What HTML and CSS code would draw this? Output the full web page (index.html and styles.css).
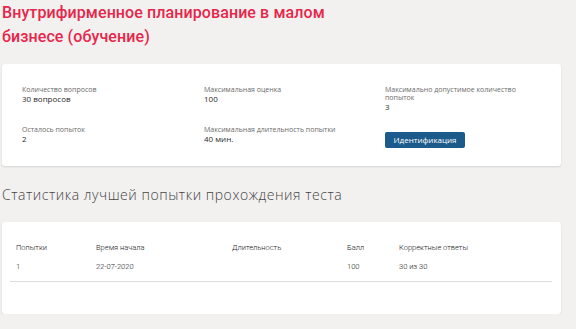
FILE: index.html
```html
<!DOCTYPE html>
<html lang="ru">
<head>
<meta charset="utf-8">
<link rel="stylesheet" href="styles.css">
</head>
<body>
<div class="page">
  <h1 class="title">Внутрифирменное планирование в малом бизнесе (обучение)</h1>
  <div class="card info">
    <div class="info-grid">
      <div class="item"><div class="label">Количество вопросов</div><div class="value">30 вопросов</div></div>
      <div class="item"><div class="label">Максимальная оценка</div><div class="value">100</div></div>
      <div class="item"><div class="label">Максимально допустимое количество попыток</div><div class="value">3</div></div>
      <div class="item"><div class="label">Осталось попыток</div><div class="value">2</div></div>
      <div class="item"><div class="label">Максимальная длительность попытки</div><div class="value">40 мин.</div></div>
      <div class="item"><button class="btn">Идентификация</button></div>
    </div>
  </div>
  <h2 class="subtitle">Статистика лучшей попытки прохождения теста</h2>
  <div class="card stats">
    <table class="tbl">
      <thead>
        <tr><th class="c1">Попытки</th><th class="c2">Время начала</th><th class="c3">Длительность</th><th class="c4">Балл</th><th class="c5">Корректные ответы</th></tr>
      </thead>
      <tbody>
        <tr><td>1</td><td>22-07-2020</td><td></td><td>100</td><td>30 из 30</td></tr>
      </tbody>
    </table>
  </div>
</div>
</body>
</html>
```
FILE: styles.css
```css
html, body {
  margin: 0;
  padding: 0;
  background: #f2f1f0;
}
body {
  font-family: "Open Sans", "Noto Sans", sans-serif;
  color: #333;
}
.page {
  width: 559px;
  padding: 0 0 0 2px;
}
.title {
  margin: 0;
  padding-top: 1px;
  font-family: Roboto, "Noto Sans", sans-serif;
  font-size: 16px;
  line-height: 24px;
  font-weight: 500;
  color: #e6264b;
  width: 345px;
  letter-spacing: 0.1px;
}
.card {
  background: #fff;
  border-radius: 3px;
  box-shadow: 0 1px 2px rgba(0,0,0,0.12);
}
.info {
  margin-top: 15px;
  height: 102px;
  box-sizing: border-box;
  padding: 22px 20px 0 20px;
}
.info-grid {
  display: grid;
  grid-template-columns: 182px 181px 1fr;
  row-gap: 13px;
}
.item {
  min-height: 27px;
}
.label {
  font-size: 7px;
  line-height: 8px;
  color: #6a6a6a;
  width: 150px;
}
.value {
  font-size: 8px;
  line-height: 9px;
  color: #2a2a2a;
  font-weight: 400;
}
.btn {
  display: inline-block;
  width: 80px;
  height: 16px;
  padding: 0;
  margin-top: 1px;
  border: none;
  border-radius: 2px;
  background: #1d5a8c;
  color: #fff;
  font-family: "Open Sans", sans-serif;
  font-size: 8px;
  line-height: 16px;
}
.subtitle {
  margin: 19px 0 0 0;
  font-size: 14px;
  line-height: 20px;
  font-weight: 300;
  color: #444;
  letter-spacing: 0.55px;
}
.stats {
  margin-top: 17px;
  height: 92px;
  box-sizing: border-box;
  padding: 17px 8px 0 8px;
}
.tbl {
  width: 542px;
  border-collapse: collapse;
  font-family: Roboto, "Liberation Sans", sans-serif;
  font-size: 7.5px;
  font-weight: 300;
  color: #222;
}
.tbl th {
  font-weight: 300;
  text-align: left;
  height: 16px;
  padding: 0 0 0 6px;
  vertical-align: middle;
}
.tbl td {
  text-align: left;
  height: 22px;
  padding: 0 0 4px 6px;
  border-bottom: 1px solid #ddd;
  vertical-align: middle;
}
.c1 { width: 74px; }
.c2 { width: 130px; }
.c3 { width: 109px; }
.c4 { width: 46px; }
```
